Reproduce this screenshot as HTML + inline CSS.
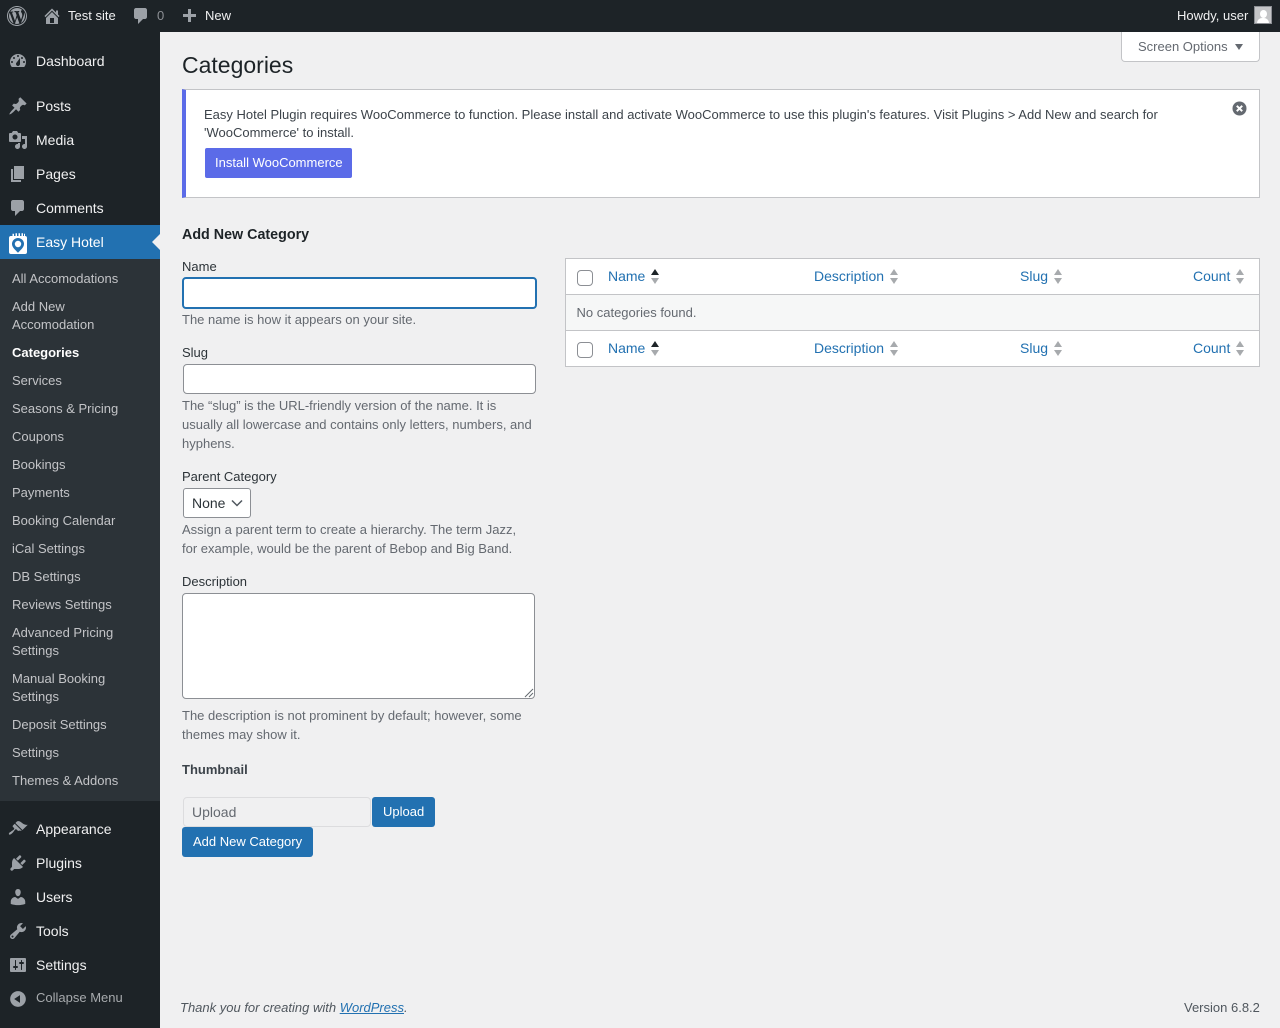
<!DOCTYPE html>
<html lang="en"><head><meta charset="utf-8"><title>Categories</title>
<style>
html,body{margin:0;padding:0;width:1280px;height:1028px;overflow:hidden;background:#f0f0f1;font-family:"Liberation Sans",sans-serif;font-size:13px;color:#3c434a}
.t{position:absolute;white-space:nowrap;line-height:18px}
.b{position:absolute;box-sizing:border-box}
svg{position:absolute;display:block}
.ic{fill:#9ca1a7}
.m{font-size:14px;color:#f0f0f1;left:36px}
.s{font-size:13px;color:#c3c4c7;left:12px}
.ab{color:#f0f0f1}
.d{color:#646970}
.l{color:#2271b1}
</style></head><body>
<div class="b" style="left:0;top:0;width:1280px;height:32px;background:#1d2327"></div>
<div class="b" style="left:0;top:32px;width:160px;height:996px;background:#1d2327"></div>
<div class="b" style="left:0;top:259px;width:160px;height:542px;background:#2c3338"></div>
<div class="b" style="left:0;top:225px;width:160px;height:34px;background:#2271b1"></div>
<svg style="left:152px;top:234px" width="8" height="16"><path d="M8 0L0 8l8 8z" fill="#f0f0f1"/></svg>

<svg class="ic" style="left:7px;top:6px" width="20" height="20" viewBox="0 0 20 20"><path d="M20 10c0-5.520-4.480-10-10-10S0 4.480 0 10s4.480 10 10 10 10-4.480 10-10zM10 1.010c4.960 0 8.990 4.030 8.990 8.990s-4.030 8.990-8.990 8.990S1.010 14.960 1.010 10 5.040 1.010 10 1.010zM8.010 14.820L4.960 6.610c.49-.03 1.050-.08 1.050-.08.43-.05.38-1.010-.06-.99 0 0-1.290.1-2.130.1-.15 0-.33 0-.52-.01 1.440-2.170 3.900-3.600 6.700-3.600 2.090 0 3.990.79 5.410 2.090-.6-.1-1.450.35-1.450 1.080 0 .66.38 1.210.79 1.870.31.54.5 1.220.5 2.210 0 1.340-1.270 4.480-1.270 4.480l-2.710-7.500c.48-.03.75-.16.75-.16.43-.05.38-1.100-.05-1.080 0 0-1.300.11-2.140.11-.78 0-2.110-.11-2.110-.11-.43-.02-.48 1.060-.05 1.080l.84.08 1.120 3.040zm6.020 2.150L16.640 10s.67-1.690.39-3.810c.63 1.140.94 2.420.94 3.810 0 2.960-1.560 5.580-3.940 6.970zM2.680 6.770L6.500 17.250c-2.670-1.300-4.470-4.080-4.470-7.250 0-1.160.2-2.230.65-3.230zm7.450 4.530l2.290 6.250c-.75.27-1.570.42-2.420.42-.72 0-1.410-.11-2.060-.3z"/></svg>
<svg class="ic" style="left:42px;top:6px" width="20" height="20" viewBox="0 0 20 20"><path fill-rule="evenodd" d="M16 8.500l1.530 1.530-1.060 1.060L10 4.620l-6.470 6.470-1.060-1.060L10 2.500l4 4v-2h2v4zm-6-2.460l6 5.990V18H4v-5.970zM12 17v-5H8v5h4z"/></svg>
<div class="t ab" style="left:68px;top:7px">Test site</div>
<svg class="ic" style="left:131px;top:6px" width="20" height="20" viewBox="0 0 20 20"><path d="M5 2h9c1.100 0 2 .9 2 2v7c0 1.100-.9 2-2 2h-2l-5 5v-5H5c-1.100 0-2-.9-2-2V4c0-1.100.9-2 2-2z"/></svg>
<div class="t" style="left:157px;top:7px;color:#8c8f94">0</div>
<svg class="ic" style="left:179px;top:7px" width="20" height="20" viewBox="0 0 20 20"><path d="M17 7v3h-5v5H9v-5H4V7h5V2h3v5h5z"/></svg>
<div class="t ab" style="left:205px;top:7px">New</div>
<div class="t ab" style="left:1177px;top:7px">Howdy, user</div>
<div class="b" style="left:1254px;top:6px;width:18px;height:18px;background:#c4c5c7;border:1px solid #8c8f94;overflow:hidden"><div class="b" style="left:4.500px;top:3px;width:7px;height:8px;border-radius:50%;background:#fff"></div><div class="b" style="left:2px;top:11px;width:12px;height:7px;border-radius:5px 5px 0 0;background:#fff"></div></div>

<svg class="ic" style="left:8px;top:51px" width="20" height="20" viewBox="0 0 20 20"><path fill-rule="evenodd" d="M3.760 16h12.480c1.100-1.370 1.760-3.110 1.760-5 0-4.420-3.580-8-8-8s-8 3.580-8 8c0 1.890.660 3.630 1.760 5zM10 4c.55 0 1 .45 1 1s-.45 1-1 1-1-.45-1-1 .45-1 1-1zM6 6c.55 0 1 .45 1 1s-.45 1-1 1-1-.45-1-1 .45-1 1-1zm8 0c.55 0 1 .45 1 1s-.45 1-1 1-1-.45-1-1 .45-1 1-1zm-5.370 5.550L12 7v6c0 1.100-.9 2-2 2s-2-.9-2-2c0-.57.24-1.080.63-1.450zM4 10c.55 0 1 .45 1 1s-.45 1-1 1-1-.45-1-1 .45-1 1-1zm12 0c.55 0 1 .45 1 1s-.45 1-1 1-1-.45-1-1 .45-1 1-1z"/></svg>
<svg class="ic" style="left:8px;top:96px" width="20" height="20" viewBox="0 0 20 20"><path d="M10.440 3.020l1.820-1.820 6.360 6.350-1.830 1.820c-1.050-.68-2.480-.57-3.410.36l-.75.75c-.92.93-1.040 2.350-.35 3.410l-1.830 1.820-2.410-2.410-2.800 2.790c-.42.42-3.380 2.710-3.800 2.290s1.860-3.390 2.280-3.810l2.790-2.790L4.100 9.360l1.830-1.820c1.050.69 2.480.57 3.400-.36l.75-.75c.93-.92 1.050-2.350.36-3.410z"/></svg>
<svg class="ic" style="left:8px;top:130px" width="20" height="20" viewBox="0 0 20 20"><path fill-rule="evenodd" d="M13 11V4c0-.55-.45-1-1-1h-1.670L9 1H5L3.670 3H2c-.55 0-1 .45-1 1v7c0 .55.45 1 1 1h10c.55 0 1-.45 1-1zM7 4.500c1.380 0 2.500 1.120 2.500 2.500S8.380 9.500 7 9.500 4.500 8.380 4.500 7 5.620 4.500 7 4.500zM14 6h5v10.500c0 1.380-1.120 2.500-2.500 2.500S14 17.880 14 16.500s1.120-2.500 2.500-2.500c.17 0 .34.020.5.050V9h-3V6zm-4 8.050V13h2v3.500c0 1.380-1.120 2.500-2.500 2.500S7 17.880 7 16.500 8.120 14 9.500 14c.17 0 .34.020.5.050z"/></svg>
<svg class="ic" style="left:8px;top:164px" width="20" height="20" viewBox="0 0 20 20"><path d="M6 15V2h10v13H6zm-1 1h8v2H3V5h2v11z"/></svg>
<svg class="ic" style="left:8px;top:198px" width="20" height="20" viewBox="0 0 20 20"><path d="M5 2h9c1.100 0 2 .9 2 2v7c0 1.100-.9 2-2 2h-2l-5 5v-5H5c-1.100 0-2-.9-2-2V4c0-1.100.9-2 2-2z"/></svg>
<svg style="left:9px;top:233px" width="18" height="21" viewBox="0 0 18 21"><path d="M2 3h1.500V.8h1.500V3h1.500V.3H8V3h1.500V.3H11V3h1.500V.3H14V3h1V.8h1V3a2 2 0 0 1 2 2v14a2 2 0 0 1-2 2H2a2 2 0 0 1-2-2V5a2 2 0 0 1 2-2z" fill="#fff"/><path d="M9 5a6 6 0 0 1 6 6c0 3.400-3.400 6-6 8.700C6.400 17 3 14.400 3 11a6 6 0 0 1 6-6z" fill="#2271b1"/><circle cx="9" cy="11" r="3.200" fill="#fff"/></svg>
<svg class="ic" style="left:8px;top:819px" width="20" height="20" viewBox="0 0 20 20"><path d="M14.480 11.060L7.410 3.990l1.500-1.500c.5-.56 2.300-.47 3.510.32 1.210.8 1.430 1.280 2.910 2.100 1.180.64 2.450 1.260 4.450.85zm-.71.71L6.700 4.700 4.930 6.470c-.39.39-.39 1.020 0 1.410l1.060 1.060c.39.39.39 1.030 0 1.420-.6.6-1.430 1.110-2.210 1.690-.35.26-.7.53-1.010.84C1.430 13.230.4 14.750 1.100 15.450c.71.7 2.220-.33 3.560-1.670.31-.31.58-.66.85-1.010.57-.78 1.080-1.610 1.690-2.210.39-.39 1.020-.39 1.410 0l1.060 1.060c.39.39 1.020.39 1.410 0z"/></svg>
<svg class="ic" style="left:8px;top:853px" width="20" height="20" viewBox="0 0 20 20"><path d="M13.110 4.360L9.870 7.600 8 5.730l3.240-3.240c.35-.34 1.050-.2 1.560.32.52.51.66 1.210.31 1.550zm-8 1.770l.91-1.120 9.010 9.010-1.190.84c-.71.71-2.630 1.160-3.820 1.160H6.140L4.900 17.260c-.59.59-1.540.59-2.120 0-.59-.58-.59-1.530 0-2.120l1.240-1.240v-3.880c0-1.130.4-3.190 1.090-3.890zm7.260 3.970l3.240-3.240c.34-.35 1.040-.21 1.550.31.52.51.66 1.210.31 1.550l-3.240 3.250z"/></svg>
<svg class="ic" style="left:8px;top:887px" width="20" height="20" viewBox="0 0 20 20"><path d="M10 9.250c-2.270 0-2.730-3.440-2.730-3.440C7 4.020 7.820 2 9.970 2c2.160 0 2.980 2.020 2.710 3.810 0 0-.41 3.440-2.680 3.440zm0 2.570L12.720 10c2.390 0 4.520 2.330 4.520 4.530v2.490s-3.650 1.130-7.240 1.130c-3.650 0-7.240-1.130-7.240-1.130v-2.490c0-2.250 1.940-4.480 4.470-4.480z"/></svg>
<svg class="ic" style="left:8px;top:921px" width="20" height="20" viewBox="0 0 20 20"><path fill-rule="evenodd" d="M16.680 9.770c-1.340 1.340-3.300 1.670-4.950.99l-5.410 6.520c-.99.99-2.590.99-3.580 0s-.99-2.590 0-3.570l6.520-5.420c-.68-1.650-.35-3.610.99-4.950 1.280-1.280 3.120-1.620 4.720-1.060l-2.890 2.890 2.820 2.820 2.860-2.870c.53 1.580.18 3.390-1.080 4.650zM3.810 16.210c.4.39 1.040.39 1.430 0 .4-.4.4-1.040 0-1.430-.39-.4-1.030-.4-1.430 0-.39.39-.39 1.030 0 1.430z"/></svg>
<svg class="ic" style="left:8px;top:955px" width="20" height="20" viewBox="0 0 20 20"><path fill-rule="evenodd" d="M18 16V4c0-.55-.45-1-1-1H3c-.55 0-1 .45-1 1v12c0 .55.45 1 1 1h14c.55 0 1-.45 1-1zM8 11h1c.55 0 1 .45 1 1s-.45 1-1 1H8v1.500c0 .28-.22.5-.5.5s-.5-.22-.5-.5V13H6c-.55 0-1-.45-1-1s.45-1 1-1h1V5.500c0-.28.22-.5.5-.5s.5.22.5.5V11zm5-2h-1c-.55 0-1-.45-1-1s.45-1 1-1h1V5.500c0-.28.22-.5.5-.5s.5.22.5.5V7h1c.55 0 1 .45 1 1s-.45 1-1 1h-1v5.500c0 .28-.22.5-.5.5s-.5-.22-.5-.5V9z"/></svg>
<svg class="ic" style="left:8px;top:989px" width="20" height="20" viewBox="0 0 20 20"><path fill-rule="evenodd" d="M10 2.160c4.330 0 7.840 3.510 7.840 7.840s-3.510 7.840-7.840 7.840S2.160 14.330 2.160 10 5.710 2.160 10 2.160zm2 11.720V6.120L6.180 9.970z"/></svg>

<div class="t m" style="top:52px">Dashboard</div>
<div class="t m" style="top:97px">Posts</div>
<div class="t m" style="top:131px">Media</div>
<div class="t m" style="top:165px">Pages</div>
<div class="t m" style="top:199px">Comments</div>
<div class="t m" style="top:233px;color:#fff">Easy Hotel</div>
<div class="t s" style="top:270px">All Accomodations</div>
<div class="t s" style="top:298px">Add New<br>Accomodation</div>
<div class="t s" style="top:344px;color:#fff;font-weight:700">Categories</div>
<div class="t s" style="top:372px">Services</div>
<div class="t s" style="top:400px">Seasons &amp; Pricing</div>
<div class="t s" style="top:428px">Coupons</div>
<div class="t s" style="top:456px">Bookings</div>
<div class="t s" style="top:484px">Payments</div>
<div class="t s" style="top:512px">Booking Calendar</div>
<div class="t s" style="top:540px">iCal Settings</div>
<div class="t s" style="top:568px">DB Settings</div>
<div class="t s" style="top:596px">Reviews Settings</div>
<div class="t s" style="top:624px">Advanced Pricing<br>Settings</div>
<div class="t s" style="top:670px">Manual Booking<br>Settings</div>
<div class="t s" style="top:716px">Deposit Settings</div>
<div class="t s" style="top:744px">Settings</div>
<div class="t s" style="top:772px">Themes &amp; Addons</div>
<div class="t m" style="top:820px">Appearance</div>
<div class="t m" style="top:854px">Plugins</div>
<div class="t m" style="top:888px">Users</div>
<div class="t m" style="top:922px">Tools</div>
<div class="t m" style="top:956px">Settings</div>
<div class="t" style="left:36px;top:989px;color:#a7aaad">Collapse Menu</div>

<div class="b" style="left:1121px;top:32px;width:139px;height:30px;background:#fff;border:1px solid #c3c4c7;border-top:0;border-radius:0 0 4px 4px"></div>
<div class="t d" style="left:1138px;top:38px">Screen Options</div>
<svg style="left:1235px;top:44px" width="8" height="6"><path d="M0 0h8L4 6z" fill="#646970"/></svg>

<div class="t" style="left:182px;top:49px;font-size:23px;line-height:32px;color:#1d2327">Categories</div>

<div class="b" style="left:182px;top:89px;width:1078px;height:109px;background:#fff;border:1px solid #c3c4c7;border-left:4px solid #5b6be8"></div>
<div class="t" style="left:204px;top:106px;line-height:18px">Easy Hotel Plugin requires WooCommerce to function. Please install and activate WooCommerce to use this plugin's features. Visit Plugins &gt; Add New and search for<br>'WooCommerce' to install.</div>
<div class="b" style="left:205px;top:148px;width:147px;height:30px;background:#5b6be8;border-radius:2px"></div>
<div class="t" style="left:215px;top:154px;color:#fff">Install WooCommerce</div>
<svg style="left:1232px;top:101px" width="15" height="15" viewBox="0 0 15 15"><circle cx="7.500" cy="7.500" r="7" fill="#646970"/><path d="M4.800 4.800l5.400 5.400M10.200 4.800l-5.400 5.400" stroke="#fff" stroke-width="2"/></svg>

<div class="t" style="left:182px;top:226px;font-size:14.300px;font-weight:700;color:#1d2327">Add New Category</div>

<div class="t" style="left:182px;top:258px;color:#2c3338">Name</div>
<div class="b" style="left:182px;top:277px;width:355px;height:32px;background:#fff;border:2px solid #2271b1;border-radius:4px"></div>
<div class="t d" style="left:182px;top:311px">The name is how it appears on your site.</div>

<div class="t" style="left:182px;top:344px;color:#2c3338">Slug</div>
<div class="b" style="left:183px;top:364px;width:353px;height:30px;background:#fff;border:1px solid #8c8f94;border-radius:4px"></div>
<div class="t d" style="left:182px;top:396px;line-height:19px">The “slug” is the URL-friendly version of the name. It is<br>usually all lowercase and contains only letters, numbers, and<br>hyphens.</div>

<div class="t" style="left:182px;top:468px;color:#2c3338">Parent Category</div>
<div class="b" style="left:183px;top:488px;width:68px;height:30px;background:#fff;border:1px solid #8c8f94;border-radius:3px"></div>
<div class="t" style="left:192px;top:494px;font-size:14px;color:#2c3338">None</div>
<svg style="left:231px;top:499px" width="12" height="8" viewBox="0 0 12 8"><path d="M1 1.500l5 5 5-5" fill="none" stroke="#50575e" stroke-width="1.500"/></svg>
<div class="t d" style="left:182px;top:520px;line-height:19px">Assign a parent term to create a hierarchy. The term Jazz,<br>for example, would be the parent of Bebop and Big Band.</div>

<div class="t" style="left:182px;top:573px;color:#2c3338">Description</div>
<div class="b" style="left:182px;top:593px;width:353px;height:106px;background:#fff;border:1px solid #8c8f94;border-radius:4px"></div>
<svg style="left:524px;top:688px" width="10" height="10"><path d="M9 1L1 9M9 5L5 9" stroke="#646970" stroke-width="1"/></svg>
<div class="t d" style="left:182px;top:706px;line-height:19px">The description is not prominent by default; however, some<br>themes may show it.</div>

<div class="t" style="left:182px;top:761px;font-weight:700">Thumbnail</div>
<div class="b" style="left:183px;top:797px;width:188px;height:30px;background:#f0f0f1;border:1px solid #dcdcde;border-radius:4px"></div>
<div class="t d" style="left:192px;top:803px;font-size:14px">Upload</div>
<div class="b" style="left:372px;top:797px;width:63px;height:30px;background:#2271b1;border-radius:3px"></div>
<div class="t" style="left:383px;top:803px;color:#fff">Upload</div>
<div class="b" style="left:182px;top:827px;width:131px;height:30px;background:#2271b1;border-radius:3px"></div>
<div class="t" style="left:193px;top:833px;color:#fff">Add New Category</div>

<div class="b" style="left:565px;top:258px;width:695px;height:109px;background:#fff;border:1px solid #c3c4c7"></div>
<div class="b" style="left:566px;top:294px;width:693px;height:37px;background:#f6f7f7;border-top:1px solid #c3c4c7;border-bottom:1px solid #c3c4c7"></div>
<div class="t d" style="left:576.500px;top:304px">No categories found.</div>

<div class="b" style="left:577px;top:270px;width:16px;height:16px;background:#fff;border:1px solid #8c8f94;border-radius:4px"></div>
<div class="b" style="left:577px;top:342px;width:16px;height:16px;background:#fff;border:1px solid #8c8f94;border-radius:4px"></div>

<div class="t l" style="left:608px;top:267px;font-size:14px">Name</div>
<div class="t l" style="left:814px;top:267px;font-size:14px">Description</div>
<div class="t l" style="left:1020px;top:267px;font-size:14px">Slug</div>
<div class="t l" style="left:1193px;top:267px;font-size:14px">Count</div>
<div class="t l" style="left:608px;top:339px;font-size:14px">Name</div>
<div class="t l" style="left:814px;top:339px;font-size:14px">Description</div>
<div class="t l" style="left:1020px;top:339px;font-size:14px">Slug</div>
<div class="t l" style="left:1193px;top:339px;font-size:14px">Count</div>

<svg style="left:650px;top:268px" width="10" height="17"><path d="M1 7L5 1l4 6z" fill="#1d2327"/><path d="M1 10h8l-4 6z" fill="#a7aaad"/></svg>
<svg style="left:889px;top:268px" width="10" height="17"><path d="M1 7L5 1l4 6z" fill="#a7aaad"/><path d="M1 10h8l-4 6z" fill="#a7aaad"/></svg>
<svg style="left:1053px;top:268px" width="10" height="17"><path d="M1 7L5 1l4 6z" fill="#a7aaad"/><path d="M1 10h8l-4 6z" fill="#a7aaad"/></svg>
<svg style="left:1235px;top:268px" width="10" height="17"><path d="M1 7L5 1l4 6z" fill="#a7aaad"/><path d="M1 10h8l-4 6z" fill="#a7aaad"/></svg>
<svg style="left:650px;top:340px" width="10" height="17"><path d="M1 7L5 1l4 6z" fill="#1d2327"/><path d="M1 10h8l-4 6z" fill="#a7aaad"/></svg>
<svg style="left:889px;top:340px" width="10" height="17"><path d="M1 7L5 1l4 6z" fill="#a7aaad"/><path d="M1 10h8l-4 6z" fill="#a7aaad"/></svg>
<svg style="left:1053px;top:340px" width="10" height="17"><path d="M1 7L5 1l4 6z" fill="#a7aaad"/><path d="M1 10h8l-4 6z" fill="#a7aaad"/></svg>
<svg style="left:1235px;top:340px" width="10" height="17"><path d="M1 7L5 1l4 6z" fill="#a7aaad"/><path d="M1 10h8l-4 6z" fill="#a7aaad"/></svg>

<div class="t" style="left:180px;top:999px;color:#50575e;font-style:italic">Thank you for creating with <span style="color:#2271b1;text-decoration:underline">WordPress</span>.</div>
<div class="t" style="left:1184px;top:999px;color:#50575e">Version 6.8.2</div>
</body></html>
